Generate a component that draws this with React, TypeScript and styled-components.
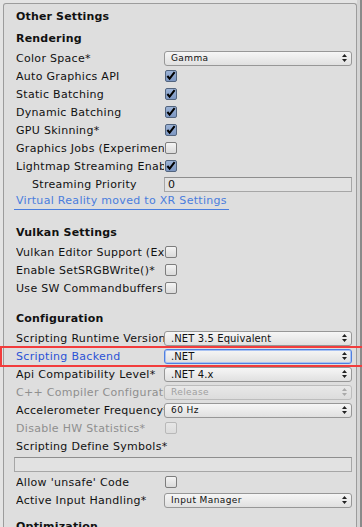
import React from "react";
import styled, { createGlobalStyle, css } from "styled-components";

const Global = createGlobalStyle`
  html, body { margin: 0; padding: 0; background: #e4e4e4; }
  body { font-family: "DejaVu Sans", Verdana, sans-serif; font-size: 11px; color: #111; }
  * { box-sizing: border-box; }
`;

const Page = styled.div`
  width: 362px;
  height: 527px;
  overflow: hidden;
  display: flex;
  padding: 3px 0 0 3px;
  background: #e4e4e4;
`;

const Panel = styled.div`
  width: 354px;
  height: 600px;
  background: #dedede;
  border: 1px solid #9c9c9c;
  border-bottom: none;
  border-radius: 3px 3px 0 0;
  display: flex;
  flex-direction: column;
`;

const ScrollEdge = styled.div`
  width: 5px;
  margin-top: -3px;
  border-right: 2px solid #8a8a8a;
  background: #d4d4d4;
`;

const Title = styled.div`
  height: 24px;
  display: flex;
  align-items: center;
  padding-left: 12px;
  font-weight: bold;
  letter-spacing: 0.15px;
`;

const Heading = styled.div<{ $gap: number }>`
  height: 20px;
  margin-top: ${(p) => p.$gap}px;
  margin-bottom: 1px;
  display: flex;
  align-items: center;
  padding-left: 12px;
  font-weight: bold;
  letter-spacing: 0.2px;
`;

const Row = styled.div`
  position: relative;
  height: 18px;
  display: flex;
  align-items: center;
  padding-left: 12px;
  letter-spacing: 0.3px;
`;

const Label = styled.div<{ $indent?: boolean; $wide?: boolean; $tone?: "normal" | "disabled" | "focus" }>`
  width: ${(p) => (p.$wide ? "auto" : "148px")};
  flex: none;
  white-space: nowrap;
  overflow: hidden;
  padding-left: ${(p) => (p.$indent ? 16 : 0)}px;
  color: ${(p) =>
    p.$tone === "disabled" ? "#8f8f8f" : p.$tone === "focus" ? "#2b52d6" : "#111"};
`;

const Highlight = styled.div`
  position: absolute;
  left: -4px;
  right: -8px;
  top: -1px;
  bottom: -2px;
  border: 2px solid #f23c3c;
  pointer-events: none;
`;

const Select = styled.div<{ $focus?: boolean; $disabled?: boolean }>`
  width: 188px;
  height: 15px;
  border: 1px solid #979797;
  border-radius: 3px;
  background: linear-gradient(#f6f6f6, #e0e0e0);
  display: flex;
  align-items: center;
  justify-content: space-between;
  padding: 0 4px 0 6px;
  letter-spacing: 0;
  ${(p) =>
    p.$focus &&
    css`
      border-color: #4f7fe0;
      box-shadow: inset 0 0 0 1px #a9c2f2;
    `}
  ${(p) =>
    p.$disabled &&
    css`
      border-color: #bcbcbc;
      background: linear-gradient(#e8e8e8, #dcdcdc);
      color: #a0a0a0;
    `}
`;

const SelectText = styled.span<{ $small?: boolean }>`
  font-size: ${(p) => (p.$small ? 9 : 10)}px;
  letter-spacing: ${(p) => (p.$small ? 0.4 : 0.1)}px;
  line-height: 13px;
`;

const Arrows = styled.svg`
  width: 5px;
  height: 8px;
  flex: none;
`;

const Check = styled.div<{ $on?: boolean; $disabled?: boolean }>`
  width: 12px;
  height: 12px;
  margin-left: 1px;
  border: 1px solid #7d7d7d;
  border-radius: 2px;
  background: linear-gradient(#f4f4f4, #dadada);
  display: flex;
  align-items: center;
  justify-content: center;
  ${(p) =>
    p.$on &&
    css`
      border-color: #52647e;
      background: linear-gradient(#9cb3d6, #7d97c2);
    `}
  ${(p) =>
    p.$disabled &&
    css`
      border-color: #b8b8b8;
      background: linear-gradient(#e6e6e6, #dcdcdc);
    `}
`;

const TextField = styled.div<{ $full?: boolean }>`
  height: 15px;
  width: ${(p) => (p.$full ? 338 : 188)}px;
  margin-left: ${(p) => (p.$full ? -2 : 0)}px;
  border: 1px solid #a6a6a6;
  border-top-color: #8e8e8e;
  background: #e2e2e2;
  display: flex;
  align-items: center;
  padding-left: 3px;
  font-size: 11px;
`;

const Link = styled.span`
  color: #4a7ddd;
  border-bottom: 1px solid #4a7ddd;
  padding: 0 2px 1px;
  margin-left: -2px;
  line-height: 14px;
`;

function ArrowIcon({ color = "#222" }: { color?: string }) {
  return (
    <Arrows viewBox="0 0 5 8">
      <path d="M2.5 0 L5 3 H0 Z M0 5 H5 L2.5 8 Z" fill={color} />
    </Arrows>
  );
}

function CheckIcon() {
  return (
    <svg width="11" height="10" viewBox="0 0 11 10">
      <path d="M1.5 5 L4 8 L9.5 0.8" stroke="#000" strokeWidth="2.2" fill="none" strokeLinejoin="miter" />
    </svg>
  );
}

type SelectProps = { value: string; small?: boolean; focus?: boolean; disabled?: boolean };

function Dropdown({ value, small, focus, disabled }: SelectProps) {
  return (
    <Select $focus={focus} $disabled={disabled}>
      <SelectText $small={small}>{value}</SelectText>
      <ArrowIcon color={disabled ? "#aaa" : "#222"} />
    </Select>
  );
}

function CheckRow({ label, on, disabled }: { label: string; on?: boolean; disabled?: boolean }) {
  return (
    <Row>
      <Label $tone={disabled ? "disabled" : "normal"}>{label}</Label>
      <Check $on={on} $disabled={disabled}>{on && <CheckIcon />}</Check>
    </Row>
  );
}

function SelectRow({
  label,
  tone,
  highlight,
  ...rest
}: SelectProps & { label: string; tone?: "normal" | "disabled" | "focus"; highlight?: boolean }) {
  return (
    <Row>
      <Label $tone={tone}>{label}</Label>
      <Dropdown {...rest} />
      {highlight && <Highlight />}
    </Row>
  );
}

export default function App() {
  return (
    <Page>
      <Global />
      <Panel>
        <Title>Other Settings</Title>
        <Heading $gap={0}>Rendering</Heading>
        <SelectRow label="Color Space*" value="Gamma" small />
        <CheckRow label="Auto Graphics API" on />
        <CheckRow label="Static Batching" on />
        <CheckRow label="Dynamic Batching" on />
        <CheckRow label="GPU Skinning*" on />
        <CheckRow label="Graphics Jobs (Experimental)*" />
        <CheckRow label="Lightmap Streaming Enabled" on />
        <Row>
          <Label $indent>Streaming Priority</Label>
          <TextField>0</TextField>
        </Row>
        <Row>
          <Link>Virtual Reality moved to XR Settings</Link>
        </Row>

        <Heading $gap={11}>Vulkan Settings</Heading>
        <CheckRow label="Vulkan Editor Support (Experimental)" />
        <CheckRow label="Enable SetSRGBWrite()*" />
        <CheckRow label="Use SW Commandbuffers" />

        <Heading $gap={11}>Configuration</Heading>
        <SelectRow label="Scripting Runtime Version*" value=".NET 3.5 Equivalent" />
        <SelectRow label="Scripting Backend" value=".NET" tone="focus" focus highlight />
        <SelectRow label="Api Compatibility Level*" value=".NET 4.x" />
        <SelectRow label="C++ Compiler Configuration" value="Release" small tone="disabled" disabled />
        <SelectRow label="Accelerometer Frequency*" value="60 Hz" small />
        <CheckRow label="Disable HW Statistics*" disabled />
        <Row>
          <Label $wide>Scripting Define Symbols*</Label>
        </Row>
        <Row>
          <TextField $full />
        </Row>
        <CheckRow label="Allow 'unsafe' Code" />
        <SelectRow label="Active Input Handling*" value="Input Manager" small />

        <Heading $gap={7}>Optimization</Heading>
      </Panel>
      <ScrollEdge />
    </Page>
  );
}
